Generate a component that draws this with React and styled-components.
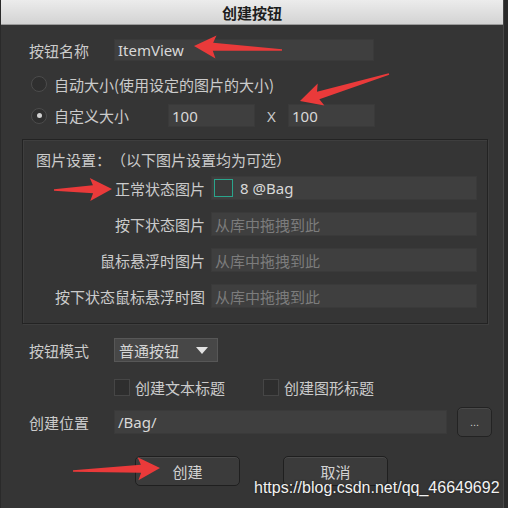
import React from 'react';
import styled, { createGlobalStyle } from 'styled-components';

const GlobalStyle = createGlobalStyle`
  html, body {
    margin: 0;
    padding: 0;
    background: #2a2a2a;
  }
  * {
    box-sizing: border-box;
  }
`;

const Page = styled.div`
  position: relative;
  width: 508px;
  height: 508px;
  overflow: hidden;
  font-family: 'Noto Sans CJK SC', 'Noto Sans', sans-serif;
  font-size: 15px;
  color: #cbcbcb;
  text-spacing-trim: space-all;
`;

const Window = styled.div`
  width: 504px;
  height: 508px;
  background: #353535;
  border-left: 1px solid #2a2a2a;
  border-right: 1px solid #474747;
  display: flex;
  flex-direction: column;
`;

const TitleBar = styled.div`
  height: 25px;
  flex-shrink: 0;
  background: linear-gradient(#ececec, #d3d3d3);
  border-bottom: 1px solid #9a9a9a;
  display: flex;
  align-items: center;
  justify-content: center;
  color: #1e1e1e;
  font-size: 15px;
  font-weight: 700;
`;

const Body = styled.div`
  padding: 14px 0 0 21px;
  display: flex;
  flex-direction: column;
`;

const Row = styled.div`
  display: flex;
  align-items: center;
  height: ${({ h }) => h || 22}px;
  margin-top: ${({ mt }) => mt || 0}px;
  padding-left: ${({ indent }) => (indent === undefined ? 7 : indent)}px;
`;

const Label = styled.span`
  width: ${({ w }) => w || 85}px;
  flex-shrink: 0;
  text-align: ${({ right }) => (right ? 'right' : 'left')};
  white-space: nowrap;
`;

const Field = styled.div`
  width: ${({ w }) => w}px;
  height: ${({ h }) => h || 23}px;
  flex-shrink: 0;
  background: #3f3f3f;
  border: 1px solid #3a3a3a;
  display: flex;
  align-items: center;
  padding-left: 3px;
  color: ${({ muted }) => (muted ? '#7c7c7c' : '#d8d8d8')};
  font-family: ${({ latin }) =>
    latin ? "'Noto Sans', 'Noto Sans CJK SC', sans-serif" : 'inherit'};
  font-size: ${({ latin }) => (latin ? '15px' : 'inherit')};
  white-space: nowrap;
`;

const Radio = styled.span`
  width: 16px;
  height: 16px;
  border-radius: 50%;
  border: 1px solid #4c4c4c;
  background: #2f2f2f;
  margin: 0 7px 0 2px;
  display: inline-flex;
  align-items: center;
  justify-content: center;
  flex-shrink: 0;

  &::after {
    content: '';
    width: 5px;
    height: 5px;
    border-radius: 50%;
    background: ${({ checked }) => (checked ? '#d0d0d0' : 'transparent')};
  }
`;

const Times = styled.span`
  width: 33px;
  text-align: center;
  font-family: 'Noto Sans', sans-serif;
  font-size: 15px;
  color: #c9c9c9;
`;

const GroupBox = styled.div`
  margin-top: 12px;
  width: 466px;
  height: 185px;
  border: 1px solid #232323;
  box-shadow: inset 1px 1px 0 #3e3e3e, 1px 1px 0 #3e3e3e;
  padding: 9px 0 0 13px;
  display: flex;
  flex-direction: column;
`;

const GroupTitle = styled.span`
  white-space: nowrap;
`;

const GroupRows = styled.div`
  margin-top: 6px;
  display: flex;
  flex-direction: column;
  gap: 12px;
`;

const Swatch = styled.span`
  width: 19px;
  height: 18px;
  border: 1px solid #2aa58c;
  background: #3a3a3a;
  margin: 0 7px 0 -1px;
  flex-shrink: 0;
`;

const Select = styled.div`
  width: 104px;
  height: 24px;
  background: #474747;
  border: 1px solid #575757;
  display: flex;
  align-items: center;
  justify-content: space-between;
  padding: 0 9px 0 4px;
  color: #d6d6d6;
`;

const Caret = styled.span`
  width: 0;
  height: 0;
  border-left: 6px solid transparent;
  border-right: 6px solid transparent;
  border-top: 7px solid #e2e2e2;
`;

const Check = styled.label`
  display: flex;
  align-items: center;
  width: ${({ w }) => w}px;
`;

const Box = styled.span`
  width: 16px;
  height: 17px;
  background: #2e2e2e;
  border: 1px solid #464646;
  margin-right: 5px;
  flex-shrink: 0;
`;

const BrowseButton = styled.button`
  margin-left: 10px;
  width: 35px;
  height: 30px;
  border-radius: 5px;
  background: #3c3c3c;
  border: 1px solid #232323;
  box-shadow: inset 0 1px 0 #4a4a4a;
  color: #c9c9c9;
  font-size: 11px;
  padding: 0;
  line-height: 1;
`;

const Footer = styled.div`
  display: flex;
  margin-top: 19px;
  padding-left: 113px;
  gap: 43px;
`;

const Button = styled.button`
  width: 105px;
  height: 30px;
  border-radius: 5px;
  background: #3b3b3b;
  border: 1px solid #1f1f1f;
  box-shadow: inset 0 1px 0 #4a4a4a;
  color: #d2d2d2;
  font-family: inherit;
  font-size: 15px;
  padding: 0;
`;

const Watermark = styled.div`
  position: absolute;
  left: 254px;
  top: 479px;
  font-family: 'Liberation Sans', Arial, sans-serif;
  font-size: 16px;
  color: #f2f2f2;
  text-shadow: 0 0 2px rgba(0, 0, 0, 0.6);
  white-space: nowrap;
`;

const Overlay = styled.svg`
  position: absolute;
  left: 0;
  top: 0;
  pointer-events: none;
`;

const arrows = [
  { from: [282, 50], to: [194, 46] },
  { from: [389, 74], to: [300, 101] },
  { from: [54, 190], to: [112, 189] },
  { from: [73, 471], to: [160, 468] },
];

const Arrow = ({ from, to }) => {
  const dx = to[0] - from[0];
  const dy = to[1] - from[1];
  const len = Math.sqrt(dx * dx + dy * dy);
  const ang = (Math.atan2(dy, dx) * 180) / Math.PI;
  const h = 22;
  return (
    <polygon
      transform={`translate(${from[0]} ${from[1]}) rotate(${ang})`}
      points={`0,-0.8 ${len - h + 3},-4 ${len - h},-11.5 ${len},0 ${len - h},11.5 ${len - h + 3},4 0,0.8`}
      fill="#ea3a3a"
    />
  );
};

const imageRows = [
  { label: '正常状态图片', value: '8 @Bag', swatch: true },
  { label: '按下状态图片', value: '从库中拖拽到此' },
  { label: '鼠标悬浮时图片', value: '从库中拖拽到此' },
  { label: '按下状态鼠标悬浮时图', value: '从库中拖拽到此' },
];

export default function App() {
  return (
    <Page>
      <GlobalStyle />
      <Window>
        <TitleBar>创建按钮</TitleBar>
        <Body>
          <Row>
            <Label>按钮名称</Label>
            <Field w={260} h={22} latin>
              ItemView
            </Field>
          </Row>
          <Row mt={12}>
            <Radio />
            <span>自动大小(使用设定的图片的大小)</span>
          </Row>
          <Row mt={9} h={23}>
            <Radio checked />
            <Label w={114}>自定义大小</Label>
            <Field w={87} latin>
              100
            </Field>
            <Times>X</Times>
            <Field w={87} latin>
              100
            </Field>
          </Row>

          <GroupBox>
            <GroupTitle>图片设置：（以下图片设置均为可选）</GroupTitle>
            <GroupRows>
              {imageRows.map((r) => (
                <Row key={r.label} h={24} indent={0}>
                  <Label w={169} right>
                    {r.label}
                  </Label>
                  <span style={{ width: 6 }} />
                  <Field w={266} h={24} muted={!r.swatch} latin={r.swatch}>
                    {r.swatch && <Swatch />}
                    {r.value}
                  </Field>
                </Row>
              ))}
            </GroupRows>
          </GroupBox>

          <Row mt={14} h={24}>
            <Label>按钮模式</Label>
            <Select>
              普通按钮
              <Caret />
            </Select>
          </Row>
          <Row mt={16} h={18} indent={92}>
            <Check w={149}>
              <Box />
              创建文本标题
            </Check>
            <Check w={150}>
              <Box />
              创建图形标题
            </Check>
          </Row>
          <Row mt={11} h={30}>
            <Label>创建位置</Label>
            <Field w={333} h={24} latin>
              /Bag/
            </Field>
            <BrowseButton>...</BrowseButton>
          </Row>
          <Footer>
            <Button>创建</Button>
            <Button>取消</Button>
          </Footer>
        </Body>
      </Window>
      <Overlay width="508" height="508">
        {arrows.map((a, i) => (
          <Arrow key={i} from={a.from} to={a.to} />
        ))}
      </Overlay>
      <Watermark>https://blog.csdn.net/qq_46649692</Watermark>
    </Page>
  );
}
